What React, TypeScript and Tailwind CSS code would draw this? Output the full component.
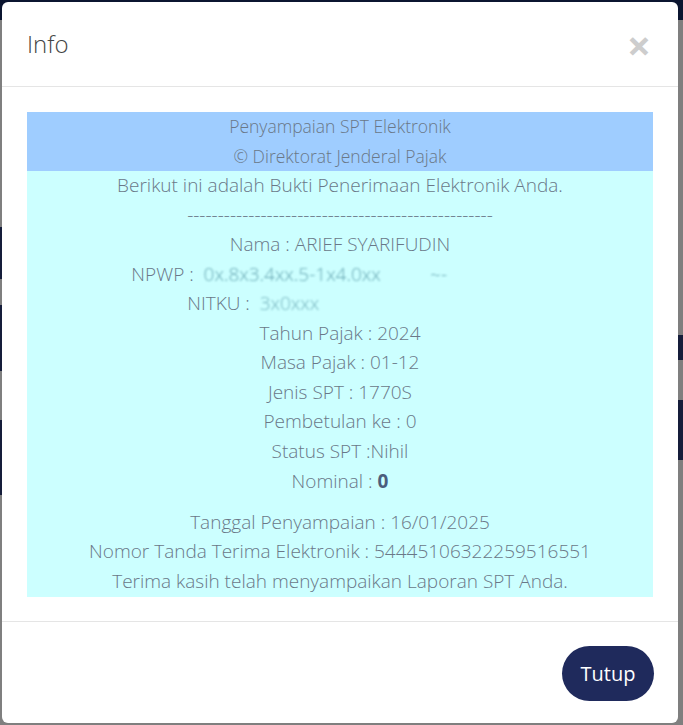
import React from "react";

const details = [
    "Tahun Pajak : 2024",
    "Masa Pajak : 01-12",
    "Jenis SPT : 1770S",
    "Pembetulan ke : 0",
    "Status SPT :Nihil",
];

export default function App() {
    return (
        <div className="relative w-[683px] h-[725px] overflow-hidden bg-[#7f7f7f]" style={{ fontFamily: '"Open Sans", "Liberation Sans", sans-serif' }}>
            {/* page behind the backdrop */}
            <div className="absolute inset-x-0 top-0 h-[20px] bg-[#0b1530]" />
            <div className="absolute left-0 top-[227px] w-[4px] h-[52px] bg-[#151d3a]" />
            <div className="absolute left-0 top-[305px] w-[4px] h-[66px] bg-[#151d3a]" />
            <div className="absolute left-0 top-[420px] w-[4px] h-[75px] bg-[#151d3a]" />
            <div className="absolute right-0 top-[335px] w-[8px] h-[25px] bg-[#151d3a]" />
            <div className="absolute right-0 top-[400px] w-[8px] h-[60px] bg-[#151d3a]" />

            <div className="absolute left-[2px] top-[2px] w-[676px] h-[721px] bg-white rounded-md flex flex-col">
                <div className="h-[86px] border-b border-[#e5e5e5] flex items-center justify-between px-[25px]">
                    <h4 className="text-[24px] text-[#444] font-light">Info</h4>
                    <span className="text-[#cdcdcd] text-[42px] font-bold leading-none mr-[2px] mt-[2px]">×</span>
                </div>

                <div className="px-[25px] pt-[25px] pb-[24px]">
                    <div className="text-center font-light text-[#6a7888] leading-[29.5px]">
                        <div className="bg-[#9fcdff] text-[17.5px]">
                            <div>Penyampaian SPT Elektronik</div>
                            <div>© Direktorat Jenderal Pajak</div>
                        </div>
                        <div className="bg-[#ccffff] text-[19px] pb-[1px]">
                            <div>Berikut ini adalah Bukti Penerimaan Elektronik Anda.</div>
                            <div>--------------------------------------------------</div>
                            <div>Nama : ARIEF SYARIFUDIN</div>
                            <div className="whitespace-nowrap">
                                NPWP : <span className="inline-block w-[350px] text-left align-top blur-[1.2px] opacity-70 text-[#3a7f90]">&nbsp;0x.8x3.4xx.5-1x4.0xx &nbsp; &nbsp; &nbsp; &nbsp; &nbsp;~-</span>
                            </div>
                            <div className="whitespace-nowrap">
                                NITKU : <span className="inline-block w-[238px] text-left align-top blur-[1.2px] opacity-60 text-[#3a7f90]">&nbsp;3x0xxx</span>
                            </div>
                            {details.map((d) => <div key={d}>{d}</div>)}
                            <div className="mt-[1px]">Nominal : <b className="font-bold text-[#4b5d7c]">0</b></div>
                            <div className="mt-[11px]">Tanggal Penyampaian : 16/01/2025</div>
                            <div>Nomor Tanda Terima Elektronik : 54445106322259516551</div>
                            <div>Terima kasih telah menyampaikan Laporan SPT Anda.</div>
                        </div>
                    </div>
                </div>

                <div className="mt-auto border-t border-[#e5e5e5] h-[102px] flex justify-end items-start pt-[24px] px-[24px]">
                    <button className="h-[55px] w-[92px] rounded-full bg-[#1f2a5c] text-white text-[20px]">Tutup</button>
                </div>
            </div>
        </div>
    );
}
